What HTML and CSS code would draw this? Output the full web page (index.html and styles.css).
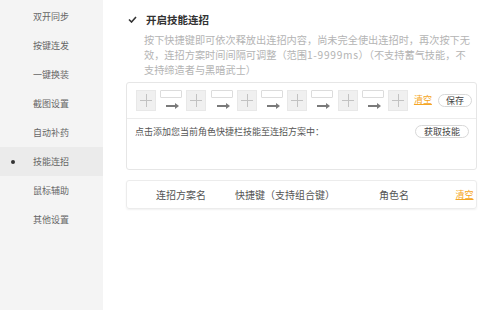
FILE: index.html
```html
<!DOCTYPE html>
<html lang="zh-CN">
<head>
  <meta charset="UTF-8">
  <title>技能连招</title>
  <link rel="stylesheet" href="styles.css">
</head>
<body>
  <div class="layout">
    <!-- 左侧菜单 -->
    <ul class="side-menu">
      <li>双开同步</li>
      <li>按键连发</li>
      <li>一键换装</li>
      <li>截图设置</li>
      <li>自动补药</li>
      <li class="active">技能连招</li>
      <li>鼠标辅助</li>
      <li>其他设置</li>
    </ul>

    <div class="main">
      <div class="title-row">
        <svg class="check" width="9" height="7" viewBox="0 0 9 7"><polyline points="1,3.5 3.5,6 8,1" fill="none" stroke="#333" stroke-width="1.6"/></svg>
        <span class="title">开启技能连招</span>
      </div>
      <p class="desc">按下快捷键即可依次释放出连招内容，尚未完全使出连招时，再次按下无效，连招方案时间间隔可调整（范围<span class="range">1-9999ms</span>）（不支持蓄气技能，不支持缔造者与黑暗武士）</p>

      <div class="combo-box">
        <div class="combo-row">
          <div class="slot"></div>
          <div class="link"><div class="delay"></div><div class="arrow"></div></div>
          <div class="slot"></div>
          <div class="link"><div class="delay"></div><div class="arrow"></div></div>
          <div class="slot"></div>
          <div class="link"><div class="delay"></div><div class="arrow"></div></div>
          <div class="slot"></div>
          <div class="link"><div class="delay"></div><div class="arrow"></div></div>
          <div class="slot"></div>
          <div class="link"><div class="delay"></div><div class="arrow"></div></div>
          <div class="slot"></div>
          <a class="clear-link">清空</a>
          <button class="pill-btn">保存</button>
        </div>
        <div class="skill-row">
          <span class="hint">点击添加您当前角色快捷栏技能至连招方案中：</span>
          <button class="pill-btn wide">获取技能</button>
        </div>
      </div>

      <div class="plan-table">
        <span>连招方案名</span>
        <span>快捷键（支持组合键）</span>
        <span>角色名</span>
        <a class="clear-link">清空</a>
      </div>
    </div>
  </div>
</body>
</html>
```

FILE: styles.css
```css
* { box-sizing: border-box; }
body {
  margin: 0;
  font-family: "Microsoft YaHei", "Noto Sans CJK SC", "Noto Sans", sans-serif;
  background: #ffffff;
  color: #333;
}
.layout {
  display: flex;
  height: 310px;
}
.side-menu {
  flex-shrink: 0;
  width: 103px;
  margin: 0;
  padding: 2px 0 0;
  list-style: none;
  background: #f4f4f4;
}
.side-menu li {
  position: relative;
  height: 29px;
  line-height: 29px;
  padding-left: 33px;
  font-size: 9px;
  color: #666;
}
.side-menu li.active {
  background: #ebebeb;
}
.side-menu li.active::before {
  content: "";
  position: absolute;
  left: 11px;
  top: 13px;
  width: 4px;
  height: 4px;
  border-radius: 50%;
  background: #333;
}
.main {
  flex: 1;
  min-width: 0;
  padding: 12px 19px 0 23px;
}
.title-row {
  display: flex;
  align-items: center;
  height: 14px;
  padding-left: 2px;
}
.check {
  margin-right: 9px;
}
.title {
  font-size: 10.5px;
  font-weight: bold;
  color: #333;
}
.desc {
  margin: 6px 0 0 18px;
  width: 331px;
  font-size: 10.2px;
  line-height: 15px;
  color: #b4b4b4;
}
.desc .range {
  letter-spacing: 0.7px;
}
.combo-box {
  margin-top: 5px;
  height: 88px;
  border: 1px solid #e6e6e6;
  border-radius: 3px;
}
.combo-row {
  display: flex;
  align-items: flex-start;
  height: 36px;
  padding: 7px 0 0 9px;
  border-bottom: 1px solid #ececec;
}
.slot {
  position: relative;
  width: 20px;
  height: 21px;
  background: #f0f0f0;
  border: 1px solid #e8e8e8;
}
.slot::before,
.slot::after {
  content: "";
  position: absolute;
  background: #c2c2c2;
}
.slot::before {
  left: 3px;
  right: 3px;
  top: 9px;
  height: 1px;
}
.slot::after {
  top: 3px;
  bottom: 3px;
  left: 9px;
  width: 1px;
}
.link {
  width: 22px;
  margin: 0 4.2px;
}
.delay {
  height: 8px;
  border: 1px solid #dcdcdc;
  border-radius: 1px;
}
.arrow {
  position: relative;
  width: 10px;
  height: 2px;
  margin: 7px auto 0;
  background: #7a7a7a;
}
.arrow::after {
  content: "";
  position: absolute;
  right: -3px;
  top: -2px;
  border-left: 4px solid #7a7a7a;
  border-top: 3px solid transparent;
  border-bottom: 3px solid transparent;
}
.clear-link {
  font-size: 9px;
  color: #f5a623;
  text-decoration: underline;
  cursor: pointer;
}
.combo-row .clear-link {
  margin: 4px 0 0 6px;
  line-height: 12px;
}
.pill-btn {
  margin: 4px 0 0 6px;
  height: 13px;
  padding: 0 7px;
  font-family: inherit;
  font-size: 9px;
  line-height: 11px;
  color: #444;
  background: #fff;
  border: 1px solid #d8d8d8;
  border-radius: 7px;
  cursor: pointer;
}
.skill-row {
  display: flex;
  justify-content: space-between;
  align-items: center;
  padding: 6px 7px 0 8px;
}
.hint {
  font-size: 9px;
  color: #555;
}
.pill-btn.wide {
  margin: 0;
  padding: 0 8px;
}
.plan-table {
  display: grid;
  grid-template-columns: 108px 100px 118px 1fr;
  align-items: center;
  margin-top: 10px;
  height: 29px;
  border: 1px solid #ececec;
  border-radius: 3px;
  box-shadow: 0 1px 2px rgba(0, 0, 0, 0.06);
  font-size: 10px;
  color: #555;
  text-align: center;
}
.plan-table .clear-link {
  font-size: 9px;
}
```
